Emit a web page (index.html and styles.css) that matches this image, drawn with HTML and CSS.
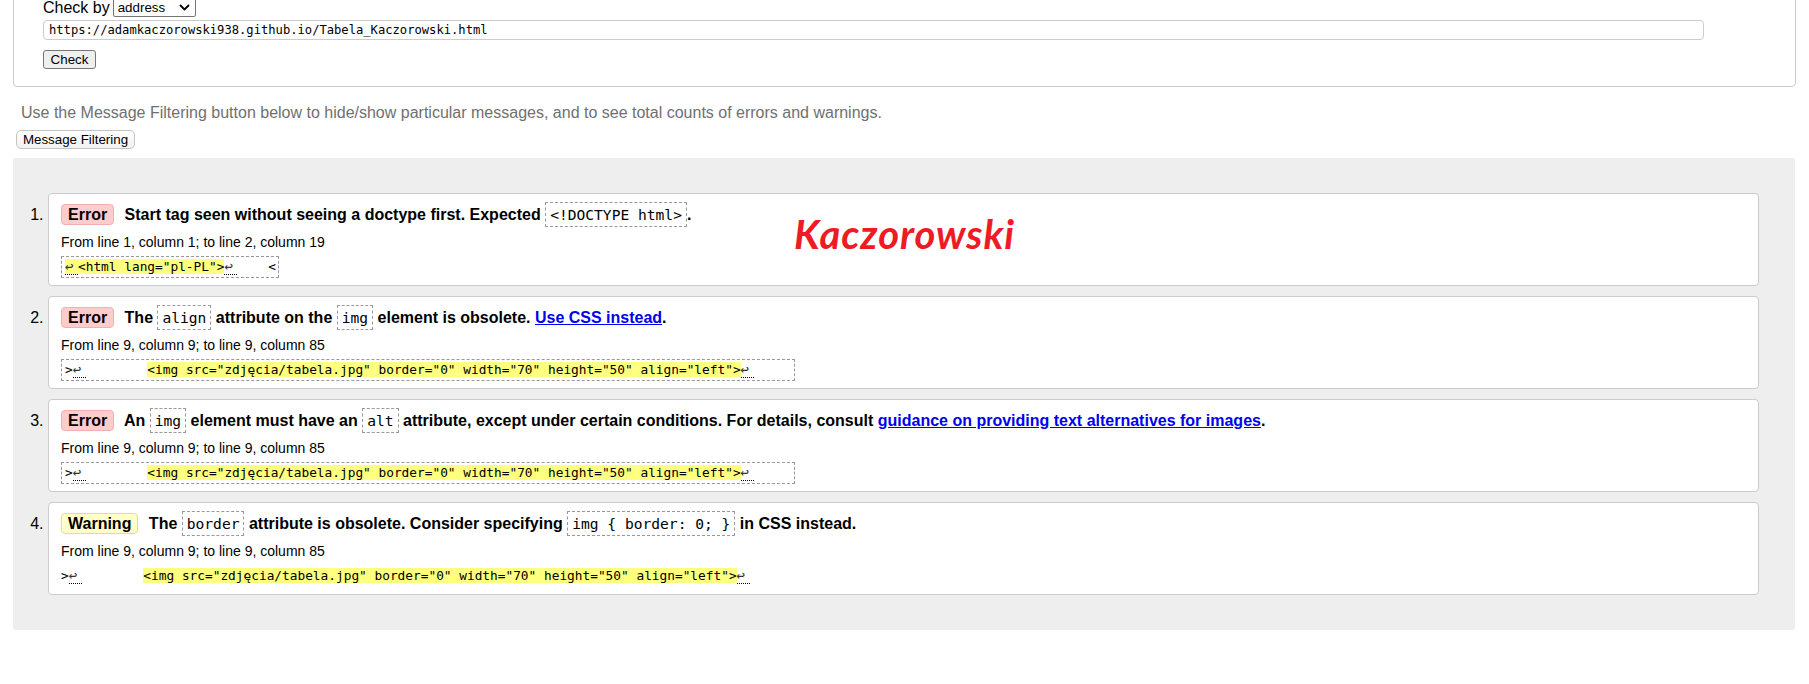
FILE: index.html
```html
<!DOCTYPE html>
<html lang="en">
<head>
<meta charset="utf-8">
<title>Nu Html Checker</title>
<link rel="stylesheet" href="styles.css">
</head>
<body>
<form class="check-form">
  <div class="check-by">
    <span class="check-label">Check by</span>
    <span class="select-wrap">
      <select class="select"><option>address</option></select>
      <svg class="chevron" width="11" height="7" viewBox="0 0 11 7"><path d="M1 1 L5.5 5.5 L10 1" fill="none" stroke="#000" stroke-width="1.8"/></svg>
    </span>
  </div>
  <input class="url" type="text" value="https://adamkaczorowski938.github.io/Tabela_Kaczorowski.html">
  <button class="check-btn" type="button">Check</button>
</form>
<p class="hint">Use the Message Filtering button below to hide/show particular messages, and to see total counts of errors and warnings.</p>
<button class="filter-btn" type="button">Message Filtering</button>
<div class="results">
  <ol class="messages">
    <li class="msg">
      <p class="msg-text"><strong class="badge error">Error</strong> <span>Start tag seen without seeing a doctype first. Expected <code class="ic">&lt;!DOCTYPE html&gt;</code>.</span></p>
      <p class="location">From line 1, column 1; to line 2, column 19</p>
      <p class="extract"><code class="ex"><b class="hl"><b class="lf">↩</b>&lt;html lang="pl-PL"&gt;</b><b class="lf">↩</b>    &lt;</code></p>
    </li>
    <li class="msg">
      <p class="msg-text"><strong class="badge error">Error</strong> <span>The <code class="ic">align</code> attribute on the <code class="ic">img</code> element is obsolete. <a href="#">Use CSS instead</a>.</span></p>
      <p class="location">From line 9, column 9; to line 9, column 85</p>
      <p class="extract"><code class="ex">&gt;<b class="lf">↩</b>        <b class="hl">&lt;img src="zdjęcia/tabela.jpg" border="0" width="70" height="50" align="left"&gt;</b><b class="lf">↩</b>     </code></p>
    </li>
    <li class="msg">
      <p class="msg-text"><strong class="badge error">Error</strong> <span>An <code class="ic">img</code> element must have an <code class="ic">alt</code> attribute, except under certain conditions. For details, consult <a href="#">guidance on providing text alternatives for images</a>.</span></p>
      <p class="location">From line 9, column 9; to line 9, column 85</p>
      <p class="extract"><code class="ex">&gt;<b class="lf">↩</b>        <b class="hl">&lt;img src="zdjęcia/tabela.jpg" border="0" width="70" height="50" align="left"&gt;</b><b class="lf">↩</b>     </code></p>
    </li>
    <li class="msg">
      <p class="msg-text"><strong class="badge warning">Warning</strong> <span>The <code class="ic">border</code> attribute is obsolete. Consider specifying <code class="ic">img { border: 0; }</code> in CSS instead.</span></p>
      <p class="location">From line 9, column 9; to line 9, column 85</p>
      <p class="extract"><code class="ex plain">&gt;<b class="lf">↩</b>        <b class="hl">&lt;img src="zdjęcia/tabela.jpg" border="0" width="70" height="50" align="left"&gt;</b><b class="lf">↩</b></code></p>
    </li>
  </ol>
</div>
<div class="signature">Kaczorowski</div>
</body>
</html>
```
FILE: styles.css
```css
* { box-sizing: border-box; }

body {
  margin: 0;
  font-family: "Liberation Sans", Arial, sans-serif;
  font-size: 16px;
  color: #000;
  background: #fff;
}

.check-form {
  margin: -22px 13px 0 13px;
  padding: 19px 20px 17px 29px;
  border: 1px solid #cccccc;
  border-radius: 4px;
}

.check-by {
  display: flex;
  align-items: center;
  gap: 3px;
  height: 19px;
}

.check-label {
  font-size: 16px;
  line-height: 18px;
}

.select-wrap {
  position: relative;
  display: inline-block;
  width: 83px;
  height: 19px;
}

.select {
  appearance: none;
  -webkit-appearance: none;
  display: block;
  width: 100%;
  height: 100%;
  margin: 0;
  padding: 0 0 0 4px;
  border: 1px solid #767676;
  border-radius: 2px;
  background: #fff;
  color: #000;
  font: 13.33px "Liberation Sans", Arial, sans-serif;
}

.chevron {
  position: absolute;
  right: 6px;
  top: 6px;
  pointer-events: none;
}

.url {
  display: block;
  margin: 3px 0 0 0;
  width: 1661px;
  height: 20px;
  padding: 0 5px;
  border: 1px solid #cccccc;
  border-radius: 4px;
  font: 12.15px "DejaVu Sans Mono", monospace;
  color: #000;
  outline: none;
}

.check-btn {
  display: block;
  margin: 10px 0 0 0;
  width: 53px;
  height: 19px;
  padding: 0;
  border: 1px solid #767676;
  border-radius: 3px;
  background: #efefef;
  color: #000;
  font: 13.33px "Liberation Sans", Arial, sans-serif;
}

.hint {
  margin: 17px 0 0 21px;
  font-size: 16px;
  line-height: 18px;
  color: #707070;
}

.filter-btn {
  display: block;
  margin: 8px 0 0 16px;
  width: 119px;
  height: 19px;
  padding: 0;
  border: 1px solid #c4c4c4;
  border-radius: 5px;
  background: linear-gradient(#ffffff, #f1f1f1);
  color: #000;
  font: 13.33px "Liberation Sans", Arial, sans-serif;
}

.results {
  margin: 9px 14px 0 13px;
  padding: 35px 36px 35px 35px;
  background: #eeeeee;
  border-radius: 3px;
}

.messages {
  margin: 0;
  padding: 0;
  list-style: decimal outside;
}

.msg {
  margin: 0 0 10px 0;
  padding: 10px 10px 7px 12px;
  background: #fff;
  border: 1px solid #cccccc;
  border-radius: 4px;
}

.msg:last-child {
  margin-bottom: 0;
}

.msg::marker {
  font-size: 16px;
  font-weight: normal;
}

.msg-text {
  margin: 0;
  line-height: 21px;
  font-weight: bold;
}

.badge {
  display: inline-block;
  margin-right: 6px;
  padding: 0 6px;
  line-height: 19px;
  border: 1px solid;
  border-radius: 4px;
}

.badge.error {
  background: #ffcccc;
  border-color: #f0b0b0;
}

.badge.warning {
  background: #ffffcc;
  border-color: #e2dc9a;
}

.msg-text a {
  color: #0000ee;
  text-decoration: underline;
}

.ic {
  font: normal 14.6px "DejaVu Sans Mono", monospace;
  line-height: 1;
  padding: 3px 4px;
  border: 1px dashed #999999;
}

.location {
  margin: 8px 0 0 0;
  font-size: 14px;
  line-height: 18px;
}

.extract {
  margin: 5px 0 0 0;
  display: flex;
}

.ex {
  display: block;
  padding: 1px 2px 1px 3px;
  border: 1px dashed #999999;
  font: 12.8px "DejaVu Sans Mono", monospace;
  line-height: 18px;
  white-space: pre;
}

.ex.plain {
  border-color: transparent;
  border-left-width: 0;
  padding-left: 0;
}

.hl {
  font-weight: normal;
  background: #ffff80;
}

.lf {
  display: inline-block;
  width: 13px;
  font-weight: normal;
  font-size: 14px;
  color: #333333;
  border-bottom: 1px dotted #000;
  line-height: 16px;
}

.signature {
  position: absolute;
  top: 214px;
  left: 794px;
  font: italic bold 40px Lato, "Liberation Sans", sans-serif;
  letter-spacing: 0.9px;
  line-height: 1;
  color: #ed1c24;
}
```
